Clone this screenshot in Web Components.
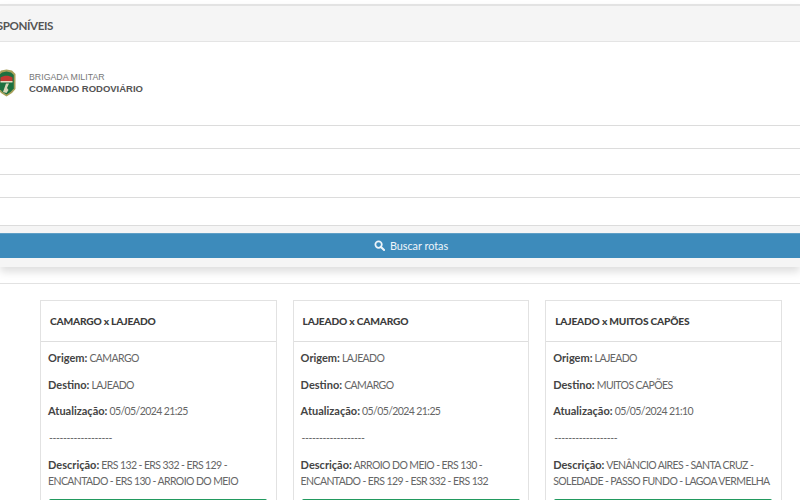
<!DOCTYPE html>
<html lang="pt-BR">
<head>
<meta charset="utf-8">
<title>Rotas disponíveis</title>
<style>
  html, body { margin: 0; padding: 0; height: 500px; overflow: hidden; background: #fff; }
  body { font-family: "Lato", "Liberation Sans", sans-serif; color: #555; }
</style>
</head>
<body>
<search-panel title-text="ROTAS DISPONÍVEIS"></search-panel>
<route-list>
  <route-card title-text="CAMARGO x LAJEADO" origem="CAMARGO" destino="LAJEADO" atualizacao="05/05/2024 21:25" descricao="ERS 132 - ERS 332 - ERS 129 - ENCANTADO - ERS 130 - ARROIO DO MEIO"></route-card>
  <route-card title-text="LAJEADO x CAMARGO" origem="LAJEADO" destino="CAMARGO" atualizacao="05/05/2024 21:25" descricao="ARROIO DO MEIO - ERS 130 - ENCANTADO - ERS 129 - ESR 332 - ERS 132"></route-card>
  <route-card title-text="LAJEADO x MUITOS CAPÕES" origem="LAJEADO" destino="MUITOS CAPÕES" atualizacao="05/05/2024 21:10" descricao="VENÂNCIO AIRES - SANTA CRUZ - SOLEDADE - PASSO FUNDO - LAGOA VERMELHA"></route-card>
</route-list>
<script>
class BrigadaLogo extends HTMLElement {
  constructor() {
    super();
    this.shadowDOM = this.attachShadow({mode: 'open'});
    this.shadowDOM.innerHTML = `
      <style>
        :host { display: flex; align-items: center; gap: 13px; margin-left: -3px; font-family: "Liberation Sans", sans-serif; }
        svg { width: 19px; height: 28px; display: block; }
        .small { font-size: 8.8px; line-height: 12px; color: #777; }
        .big { font-size: 9.5px; line-height: 12px; font-weight: bold; color: #555; }
      </style>
      <svg viewBox="0 0 19 28">
        <path d="M9.5 0.5 L15 1.5 L18.5 5 V20 L15 24 L9.5 27.5 L4 24 L0.5 20 V5 L4 1.5 Z" fill="#a8a05a"/>
        <path d="M9.5 2.5 L14 3.5 L16.8 6 V19.5 L13.5 23 L9.5 25.6 L5.5 23 L2.2 19.5 V6 L5 3.5 Z" fill="#1d7040"/>
        <path d="M3.5 8.5 C7 6 12 6 15.5 8.5 V13 H3.5 Z" fill="#c23a33"/>
        <path d="M3.5 12 H15.5 V13.5 H3.5 Z" fill="#e6e2c8"/>
        <path d="M6 23 L9 14.5 L12 14.5 L10 19 L11.5 21 L9.5 24 Z" fill="#d9d6b8"/>
      </svg>
      <div>
        <div class="small">BRIGADA MILITAR</div>
        <div class="big">COMANDO RODOVIÁRIO</div>
      </div>`;
  }
}
customElements.define('brigada-logo', BrigadaLogo);

class SearchPanel extends HTMLElement {
  constructor() {
    super();
    this.shadowDOM = this.attachShadow({mode: 'open'});
  }
  connectedCallback() {
    this.shadowDOM.innerHTML = `
      <style>
        * { box-sizing: border-box; }
        :host { display: block; padding-top: 4px; }
        .panel { background: #f5f5f5; border-top: 2px solid #e3e3e3; box-shadow: 0 5px 8px rgba(0,0,0,.13); }
        .heading { height: 36px; display: flex; align-items: center; padding-top: 3px; border-bottom: 1px solid #e4e4e4; margin-left: -52px; font-size: 11.6px; letter-spacing: -.4px; font-weight: 700; color: #555; white-space: nowrap; }
        .logo-row { height: 83px; background: #fff; padding-top: 27px; }
        .field { background: #fff; border-top: 1px solid #dcdcdc; }
        .f1 { height: 23px; } .f2 { height: 26px; } .f3 { height: 23px; } .f4 { height: 29px; border-bottom: 1px solid #dcdcdc; }
        .actions { padding: 7px 0 9px; }
        button { display: flex; width: 100%; height: 25px; align-items: center; justify-content: center; gap: 5px; padding: 0 0 2px 22px; border: 0; border-top: 1px solid #5f9fc6; background: #3d8bbb; color: #eef5fa; font: 400 10.8px "Lato", sans-serif; }
        svg { width: 11px; height: 11px; display: block; }
      </style>
      <div class="panel">
        <div class="heading">${this.getAttribute('title-text')}</div>
        <div class="logo-row"><brigada-logo></brigada-logo></div>
        <div class="field f1"></div>
        <div class="field f2"></div>
        <div class="field f3"></div>
        <div class="field f4"></div>
        <div class="actions">
          <button type="button">
            <svg viewBox="0 0 12 12"><circle cx="5" cy="5" r="3.5" fill="none" stroke="#eef5fa" stroke-width="1.9"/><path d="M7.6 7.6 L11 11" stroke="#eef5fa" stroke-width="2.2" stroke-linecap="round"/></svg>
            <span>Buscar rotas</span>
          </button>
        </div>
      </div>`;
  }
}
customElements.define('search-panel', SearchPanel);

class RouteList extends HTMLElement {
  constructor() {
    super();
    this.shadowDOM = this.attachShadow({mode: 'open'});
    this.shadowDOM.innerHTML = `
      <style>
        :host { display: block; margin-top: 16px; border-top: 1px solid #e2e2e2; padding: 16px 18px 0 40px; }
        .grid { display: grid; grid-template-columns: repeat(3, 236.6px); column-gap: 16px; }
      </style>
      <div class="grid"><slot></slot></div>`;
  }
}
customElements.define('route-list', RouteList);

class RouteCard extends HTMLElement {
  constructor() {
    super();
    this.shadowDOM = this.attachShadow({mode: 'open'});
  }
  connectedCallback() {
    const a = n => this.getAttribute(n);
    this.shadowDOM.innerHTML = `
      <style>
        * { box-sizing: border-box; }
        :host { display: block; border: 1px solid #e2e2e2; background: #fff; height: 260px; font-size: 10.5px; letter-spacing: -.6px; color: #666; }
        h3 { margin: 0; height: 41px; display: flex; align-items: center; padding-left: 9px; border-bottom: 1px solid #dedede; font-size: 10.2px; letter-spacing: -.2px; font-weight: 900; color: #3c3c3c; white-space: nowrap; }
        .body { padding: 8px 8px 0 7px; }
        p { margin: 0 0 10.7px; line-height: 16px; white-space: nowrap; }
        p.desc { white-space: normal; margin-bottom: 10px; }
        p.rule { letter-spacing: -.4px; padding-left: 1px; }
        b { font-size: 11px; letter-spacing: 0; font-weight: 700; color: #444; }
        .go { display: block; width: 218px; height: 30px; margin-left: 1px; background: #27a869; border-top: 1px solid #229a5f; border-radius: 2px; }
      </style>
      <h3>${a('title-text')}</h3>
      <div class="body">
        <p><b>Origem:</b> ${a('origem')}</p>
        <p><b>Destino:</b> ${a('destino')}</p>
        <p><b>Atualização:</b> ${a('atualizacao')}</p>
        <p class="rule">------------------</p>
        <p class="desc"><b>Descrição:</b> ${a('descricao')}</p>
        <div class="go"></div>
      </div>`;
  }
}
customElements.define('route-card', RouteCard);
</script>
</body>
</html>
